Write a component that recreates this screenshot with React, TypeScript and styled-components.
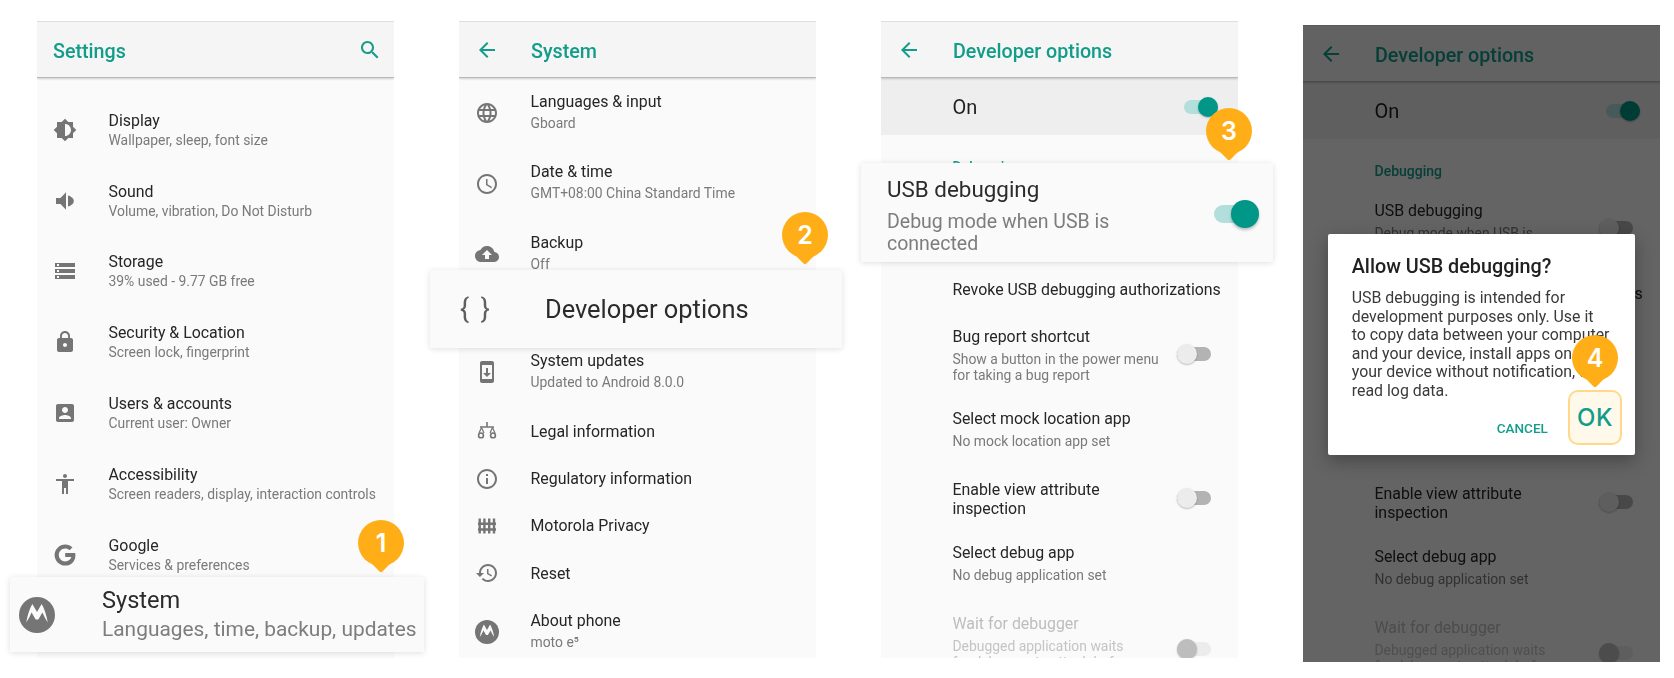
import { ReactNode } from 'react'
import styled, { createGlobalStyle } from 'styled-components'

const GlobalStyle = createGlobalStyle`
  html, body {
    margin: 0;
    padding: 0;
    background: #fff;
    font-family: Roboto, "Liberation Sans", sans-serif;
  }
`

const paths: Record<string, string> = {
  display:
    'M20 15.31L23.31 12 20 8.69V4h-4.69L12 .69 8.69 4H4v4.69L.69 12 4 15.31V20h4.69L12 23.31 15.31 20H20v-4.69zM12 18V6c3.31 0 6 2.69 6 6s-2.69 6-6 6z',
  sound: 'M3 9v6h4.5l5.5 5.8V3.2L7.5 9H3zM15 6.5v11c3-.8 5.8-2.8 5.8-5.5S18 7.3 15 6.5z',
  storage:
    'M2 20h20v-4H2v4zm2-3h2v2H4v-2zM2 4v4h20V4H2zm4 3H4V5h2v2zm-4 7h20v-4H2v4zm2-3h2v2H4v-2z',
  lock: 'M18 8h-1V6c0-2.76-2.24-5-5-5S7 3.24 7 6v2H6c-1.1 0-2 .9-2 2v10c0 1.1.9 2 2 2h12c1.1 0 2-.9 2-2V10c0-1.1-.9-2-2-2zm-6 9c-1.1 0-2-.9-2-2s.9-2 2-2 2 .9 2 2-.9 2-2 2zm3.1-9H8.9V6c0-1.71 1.39-3.1 3.1-3.1 1.71 0 3.1 1.39 3.1 3.1v2z',
  account:
    'M3 5v14c0 1.1.89 2 2 2h14c1.1 0 2-.9 2-2V5c0-1.1-.9-2-2-2H5c-1.11 0-2 .9-2 2zm12 4c0 1.66-1.34 3-3 3s-3-1.34-3-3 1.34-3 3-3 3 1.34 3 3zm-9 8c0-2 4-3.1 6-3.1s6 1.1 6 3.1v1H6v-1z',
  accessibility:
    'M12 2c1.1 0 2 .9 2 2s-.9 2-2 2-2-.9-2-2 .9-2 2-2zm9 7h-6v13h-2v-6h-2v6H9V9H3V7h18v2z',
  google:
    'M12.2 10v4.1h6.2c-.6 2.5-3 4.3-6.2 4.3-3.6 0-6.4-2.9-6.4-6.4s2.8-6.4 6.4-6.4c1.7 0 3.2.6 4.3 1.7l3-3C17.6 2.5 15.1 1.4 12.2 1.4 6.4 1.4 1.6 6.2 1.6 12s4.8 10.6 10.6 10.6c6.1 0 10.2-4.3 10.2-10.4 0-.7-.1-1.5-.2-2.2H12.2z',
  language:
    'M11.99 2C6.47 2 2 6.48 2 12s4.47 10 9.99 10C17.52 22 22 17.52 22 12S17.52 2 11.99 2zm6.93 6h-2.95c-.32-1.25-.78-2.45-1.38-3.56 1.84.63 3.37 1.91 4.33 3.56zM12 4.04c.83 1.2 1.48 2.53 1.91 3.96h-3.82c.43-1.43 1.08-2.76 1.91-3.96zM4.26 14C4.1 13.36 4 12.69 4 12s.1-1.36.26-2h3.38c-.08.66-.14 1.32-.14 2 0 .68.06 1.34.14 2H4.26zm.82 2h2.95c.32 1.25.78 2.45 1.38 3.56-1.84-.63-3.37-1.9-4.33-3.56zm2.95-8H5.08c.96-1.66 2.49-2.93 4.33-3.56C8.81 5.55 8.35 6.75 8.03 8zM12 19.96c-.83-1.2-1.48-2.53-1.91-3.96h3.82c-.43 1.43-1.08 2.76-1.91 3.96zM14.34 14H9.66c-.09-.66-.16-1.32-.16-2 0-.68.07-1.35.16-2h4.68c.09.65.16 1.32.16 2 0 .68-.07 1.34-.16 2zm.25 5.56c.6-1.11 1.06-2.31 1.38-3.56h2.95c-.96 1.65-2.49 2.93-4.33 3.56zM16.36 14c.08-.66.14-1.32.14-2 0-.68-.06-1.34-.14-2h3.38c.16.64.26 1.31.26 2s-.1 1.36-.26 2h-3.38z',
  clock:
    'M11.99 2C6.47 2 2 6.48 2 12s4.47 10 9.99 10C17.52 22 22 17.52 22 12S17.52 2 11.99 2zM12 20c-4.42 0-8-3.58-8-8s3.58-8 8-8 8 3.58 8 8-3.58 8-8 8zm.5-13H11v6l5.25 3.15.75-1.23-4.5-2.67z',
  backup:
    'M19.35 10.04C18.67 6.59 15.64 4 12 4 9.11 4 6.6 5.64 5.35 8.04 2.34 8.36 0 10.91 0 14c0 3.31 2.69 6 6 6h13c2.76 0 5-2.24 5-5 0-2.64-2.05-4.78-4.65-4.96zM14 13v4h-4v-4H7l5-5 5 5h-3z',
  update:
    'M17 1.01L7 1c-1.1 0-2 .9-2 2v18c0 1.1.9 2 2 2h10c1.1 0 2-.9 2-2V3c0-1.1-.9-1.99-2-1.99zM17 19H7V5h10v14zm-1-6h-3V8h-2v5H8l4 4 4-4z',
  info: 'M11 7h2v2h-2zm0 4h2v6h-2zm1-9C6.48 2 2 6.48 2 12s4.48 10 10 10 10-4.48 10-10S17.52 2 12 2zm0 18c-4.41 0-8-3.59-8-8s3.59-8 8-8 8 3.59 8 8-3.59 8-8 8z',
  history:
    'M13 3c-4.97 0-9 4.03-9 9H1l3.89 3.89.07.14L9 12H6c0-3.87 3.13-7 7-7s7 3.13 7 7-3.13 7-7 7c-1.93 0-3.68-.79-4.94-2.06l-1.42 1.42C8.27 19.99 10.51 21 13 21c4.97 0 9-4.03 9-9s-4.03-9-9-9zm-1 5v5l4.28 2.54.72-1.21-3.5-2.08V8H12z',
  back: 'M20 11H7.83l5.59-5.59L12 4l-8 8 8 8 1.41-1.41L7.83 13H20v-2z',
  search:
    'M15.5 14h-.79l-.28-.27C15.41 12.59 16 11.11 16 9.5 16 5.91 13.09 3 9.5 3S3 5.91 3 9.5 5.91 16 9.5 16c1.61 0 3.09-.59 4.23-1.57l.27.28v.79l5 4.99L20.49 19l-4.99-5zm-6 0C7.01 14 5 11.99 5 9.5S7.01 5 9.5 5 14 7.01 14 9.5 11.99 14 9.5 14z',
}

function Icon({ name, size = 24 }: { name: string; size?: number }) {
  return (
    <svg width={size} height={size} viewBox="0 0 24 24" fill="currentColor">
      <path fillRule="evenodd" d={paths[name]} />
    </svg>
  )
}

function MotoIcon({ size = 24 }: { size?: number }) {
  return (
    <svg width={size} height={size} viewBox="0 0 24 24">
      <circle cx="12" cy="12" r="12" fill="currentColor" />
      <path
        d="M4.8 17C5.8 11.5 7.2 7.5 8.9 4.6L12 10l3.1-5.4c1.7 2.9 3.1 6.9 4.1 12.4-1.4-2-2.6-4.2-3.6-6.6L12.9 15h-1.8L8.4 10.4C7.4 12.8 6.2 15 4.8 17z"
        fill="#fafafa"
      />
    </svg>
  )
}

function ScalesIcon() {
  return (
    <svg width={24} height={24} viewBox="0 0 24 24" fill="none" stroke="currentColor" strokeWidth="1.6">
      <path d="M12 3v5M5 8h14" />
      <path d="M6.5 8.5L4 14M6.5 8.5L9 14M17.5 8.5L15 14M17.5 8.5L20 14" strokeWidth="1.2" />
      <circle cx="6" cy="16.4" r="2.4" />
      <circle cx="18" cy="16.4" r="2.4" />
    </svg>
  )
}

function FenceIcon() {
  return (
    <svg width={24} height={24} viewBox="0 0 24 24" fill="currentColor">
      <path d="M3.5 4.5h2.4v15H3.5zM8.2 4.5h2.4v15H8.2zM13 4.5h2.4v15H13zM17.8 4.5h2.4v15h-2.4z" />
      <path d="M3 8.5h18v2.6H3zM3 14.2h18v2.6H3z" />
    </svg>
  )
}

const Page = styled.div`
  display: flex;
  gap: 65.5px;
  width: 1674px;
  height: 678px;
  padding-left: 37px;
  box-sizing: border-box;
  overflow: hidden;
  background: #fff;
`

const Column = styled.div<{ $top?: number }>`
  position: relative;
  flex: 0 0 356.5px;
  min-width: 0;
  height: 637px;
  margin-top: ${({ $top }) => $top ?? 21}px;
`

const Screen = styled.div`
  position: relative;
  display: flex;
  flex-direction: column;
  height: 100%;
  overflow: hidden;
  background: #fafafa;
  filter: blur(0.35px);
`

const Header = styled.div`
  position: relative;
  z-index: 1;
  flex: 0 0 57px;
  box-sizing: border-box;
  display: flex;
  align-items: center;
  padding: 0 12px 0 16px;
  background: #f5f5f5;
  border-top: 1px solid #dedede;
  border-bottom: 1px solid #b9b9b9;
  box-shadow: 0 1px 2px rgba(0, 0, 0, 0.18);
  color: #129c8a;
`

const HeaderTitle = styled.div<{ $indent?: boolean }>`
  flex: 1;
  padding-left: ${({ $indent }) => ($indent ? '32px' : '0')};
  font-size: 19.7px;
  font-weight: 500;
  margin-top: 3px;
`

const List = styled.div<{ $top?: number }>`
  padding-top: ${({ $top }) => $top ?? 0}px;
`

const Row = styled.div<{ $h: number }>`
  display: flex;
  align-items: center;
  height: ${({ $h }) => $h}px;
`

const IconSlot = styled.div`
  flex: 0 0 71.5px;
  box-sizing: border-box;
  padding-left: 16px;
  display: flex;
  color: #757575;
`

const Texts = styled.div<{ $gap: number; $lift?: number }>`
  display: flex;
  flex-direction: column;
  gap: ${({ $gap }) => $gap}px;
  padding-bottom: ${({ $lift }) => $lift ?? 0}px;
`

const Title = styled.div<{ $off?: boolean }>`
  font-size: 15.9px;
  line-height: 20px;
  white-space: nowrap;
  color: ${({ $off }) => ($off ? '#bdbdbd' : '#262626')};
`

const Sub = styled.div<{ $off?: boolean }>`
  font-size: 13.9px;
  line-height: 17px;
  white-space: nowrap;
  color: ${({ $off }) => ($off ? '#c4c4c4' : '#7a7a7a')};
`

const SingleTitle = styled(Title)`
  margin-top: 1px;
`

const OnBand = styled.div`
  flex: 0 0 57px;
  display: flex;
  align-items: center;
  justify-content: space-between;
  padding: 0 20px 0 71.5px;
  background: #eeeeee;
  font-size: 20px;
  color: #1f1f1f;
`

const SectionLabel = styled.div`
  flex: 0 0 47.5px;
  box-sizing: border-box;
  padding: 23px 0 0 71.5px;
  font-size: 14px;
  line-height: 18px;
  font-weight: 500;
  color: #129c8a;
`

const OptionRow = styled.div<{ $h: number }>`
  flex: 0 0 ${({ $h }) => $h}px;
  display: flex;
  justify-content: space-between;
  box-sizing: border-box;
  padding: 14.5px 27px 0 71.5px;
`

const OptionTitle = styled(Title)`
  line-height: 19px;
`

const OptionSub = styled(Sub)`
  margin-top: 5px;
  line-height: 16.3px;
`

const Track = styled.div<{ $on?: boolean; $off?: boolean }>`
  position: relative;
  flex: 0 0 34px;
  width: 34px;
  height: 14px;
  border-radius: 7px;
  background: ${({ $on, $off }) => ($on ? '#b2dfdb' : $off ? '#ececec' : '#b3b3b3')};
`

const Thumb = styled.div<{ $on?: boolean; $off?: boolean }>`
  position: absolute;
  top: -3px;
  left: ${({ $on }) => ($on ? '14px' : '0')};
  width: 20px;
  height: 20px;
  border-radius: 50%;
  background: ${({ $on, $off }) => ($on ? '#009688' : $off ? '#bdbdbd' : '#ececec')};
  box-shadow: 0 1px 2px rgba(0, 0, 0, 0.25);
`

const SwitchSlot = styled.div<{ $offset: number }>`
  margin-top: ${({ $offset }) => $offset}px;
`

const BigTrack = styled.div`
  position: relative;
  flex: 0 0 45px;
  height: 18px;
  margin: 3px 14px 0 0;
  border-radius: 9px;
  background: #b2dfdb;
`

const BigThumb = styled.div`
  position: absolute;
  top: -5px;
  right: 0;
  width: 28px;
  height: 28px;
  border-radius: 50%;
  background: #009688;
  box-shadow: 0 2px 3px rgba(0, 0, 0, 0.25);
`

function Switch({ on, off }: { on?: boolean; off?: boolean }) {
  return (
    <Track $on={on} $off={off}>
      <Thumb $on={on} $off={off} />
    </Track>
  )
}

function Option({
  h,
  title,
  sub,
  off,
  switchAt,
  disabled,
}: {
  h: number
  title: ReactNode
  sub?: ReactNode
  off?: boolean
  switchAt?: number
  disabled?: boolean
}) {
  return (
    <OptionRow $h={h}>
      <div>
        <OptionTitle $off={off}>{title}</OptionTitle>
        {sub && <OptionSub $off={off}>{sub}</OptionSub>}
      </div>
      {switchAt !== undefined && (
        <SwitchSlot $offset={switchAt}>
          <Switch off={disabled} />
        </SwitchSlot>
      )}
    </OptionRow>
  )
}

function DeveloperOptions() {
  return (
    <>
      <Header>
        <Icon name="back" />
        <HeaderTitle $indent>Developer options</HeaderTitle>
      </Header>
      <OnBand>
        On
        <Switch on />
      </OnBand>
      <SectionLabel>Debugging</SectionLabel>
      <Option
        h={83}
        title="USB debugging"
        sub={
          <>
            Debug mode when USB is
            <br />
            connected
          </>
        }
        switchAt={20}
      />
      <Option h={46.5} title="Revoke USB debugging authorizations" />
      <Option
        h={82.5}
        title="Bug report shortcut"
        sub={
          <>
            Show a button in the power menu
            <br />
            for taking a bug report
          </>
        }
        switchAt={20.5}
      />
      <Option h={71} title="Select mock location app" sub="No mock location app set" />
      <Option
        h={63}
        title={
          <>
            Enable view attribute
            <br />
            inspection
          </>
        }
        switchAt={11}
      />
      <Option h={71} title="Select debug app" sub="No debug application set" />
      <Option
        h={100}
        off
        disabled
        title="Wait for debugger"
        sub={
          <>
            Debugged application waits
            <br />
            for debugger to attach before
          </>
        }
        switchAt={28}
      />
    </>
  )
}

const Callout = styled.div<{ $left: number; $top: number; $w: number; $h: number }>`
  position: absolute;
  z-index: 2;
  left: ${({ $left }) => $left}px;
  top: ${({ $top }) => $top}px;
  width: ${({ $w }) => $w}px;
  height: ${({ $h }) => $h}px;
  box-sizing: border-box;
  display: flex;
  align-items: center;
  background: #fafafa;
  box-shadow: 0 1px 6px rgba(0, 0, 0, 0.13);
  filter: blur(0.3px);
`

const CalloutIcon = styled.div<{ $w: number; $pad: number }>`
  flex: 0 0 ${({ $w }) => $w}px;
  box-sizing: border-box;
  padding-left: ${({ $pad }) => $pad}px;
  display: flex;
  color: #757575;
`

const CalloutTitle = styled.div<{ $size: number }>`
  font-size: ${({ $size }) => $size}px;
  line-height: 30px;
  white-space: nowrap;
  color: #2b2b2b;
`

const CalloutSub = styled.div<{ $size: number; $gap: number }>`
  margin-top: ${({ $gap }) => $gap}px;
  font-size: ${({ $size }) => $size}px;
  line-height: 22.5px;
  white-space: nowrap;
  color: #7d7d7d;
`

const Braces = styled.div`
  font-size: 27px;
  line-height: 30px;
  color: #5f5f5f;
  word-spacing: 5px;
`

const CalloutText = styled.div<{ $pad: string }>`
  flex: 1;
  padding: ${({ $pad }) => $pad};
`

const Badge = styled.div<{ $left: number; $top: number }>`
  position: absolute;
  z-index: 3;
  left: ${({ $left }) => $left}px;
  top: ${({ $top }) => $top}px;
  width: 46px;
  height: 46px;
  border-radius: 50%;
  background: #ffae17;
  color: #fff;
  font-family: Inter, Roboto, sans-serif;
  font-size: 25px;
  font-weight: 600;
  line-height: 46px;
  text-align: center;

  &::after {
    content: '';
    position: absolute;
    left: 16px;
    top: 36px;
    width: 14px;
    height: 14px;
    background: #ffae17;
    border-radius: 0 0 2px 0;
    transform: rotate(45deg);
  }
`

const BadgeDigit = styled.span`
  position: relative;
  z-index: 1;
`

const Scrim = styled.div`
  position: absolute;
  inset: 0;
  z-index: 1;
  box-sizing: border-box;
  padding-top: 2px;
  display: flex;
  align-items: center;
  justify-content: center;
  background: rgba(0, 0, 0, 0.6);
`

const Dialog = styled.div`
  width: 307px;
  height: 221px;
  box-sizing: border-box;
  padding: 21px 0 0 24px;
  background: #fff;
  border-radius: 2px;
  box-shadow: 0 6px 18px rgba(0, 0, 0, 0.3);
`

const DialogTitle = styled.div`
  font-size: 19.8px;
  font-weight: 500;
  line-height: 24px;
  color: #212121;
`

const DialogBody = styled.div`
  margin-top: 10px;
  font-size: 15.9px;
  line-height: 18.6px;
  color: #3a3a3a;
  white-space: nowrap;
`

const DialogActions = styled.div`
  margin-top: 19px;
  padding-left: 145px;
  font-size: 13.5px;
  font-weight: 500;
  color: #129c8a;
`

const OkBox = styled.div`
  position: absolute;
  z-index: 2;
  left: 265px;
  top: 365px;
  width: 54px;
  height: 55px;
  box-sizing: border-box;
  display: flex;
  align-items: center;
  justify-content: center;
  border: 2px solid #ffd98a;
  border-radius: 10px;
  background: #fff9ec;
  color: #129c8a;
  font-family: Inter, Roboto, sans-serif;
  font-size: 24px;
  font-weight: 500;
  letter-spacing: 0.5px;
`

export default function App() {
  return (
    <>
      <GlobalStyle />
      <Page>
        <Column>
          <Screen>
            <Header>
              <HeaderTitle>Settings</HeaderTitle>
              <Icon name="search" />
            </Header>
            <List $top={16.5}>
              <Row $h={70.8}>
                <IconSlot><Icon name="display" /></IconSlot>
                <Texts $gap={1}><Title>Display</Title><Sub>Wallpaper, sleep, font size</Sub></Texts>
              </Row>
              <Row $h={70.8}>
                <IconSlot><Icon name="sound" /></IconSlot>
                <Texts $gap={1}><Title>Sound</Title><Sub>Volume, vibration, Do Not Disturb</Sub></Texts>
              </Row>
              <Row $h={70.8}>
                <IconSlot><Icon name="storage" /></IconSlot>
                <Texts $gap={1}><Title>Storage</Title><Sub>39% used - 9.77 GB free</Sub></Texts>
              </Row>
              <Row $h={70.8}>
                <IconSlot><Icon name="lock" /></IconSlot>
                <Texts $gap={1}><Title>Security &amp; Location</Title><Sub>Screen lock, fingerprint</Sub></Texts>
              </Row>
              <Row $h={70.8}>
                <IconSlot><Icon name="account" /></IconSlot>
                <Texts $gap={1}><Title>Users &amp; accounts</Title><Sub>Current user: Owner</Sub></Texts>
              </Row>
              <Row $h={70.8}>
                <IconSlot><Icon name="accessibility" /></IconSlot>
                <Texts $gap={1}><Title>Accessibility</Title><Sub>Screen readers, display, interaction controls</Sub></Texts>
              </Row>
              <Row $h={70.8}>
                <IconSlot><Icon name="google" /></IconSlot>
                <Texts $gap={1}><Title>Google</Title><Sub>Services &amp; preferences</Sub></Texts>
              </Row>
            </List>
          </Screen>
          <Callout $left={-27} $top={556} $w={414} $h={75}>
            <CalloutIcon $w={92} $pad={9}><MotoIcon size={36} /></CalloutIcon>
            <CalloutText $pad="0 0 3px 0">
              <CalloutTitle $size={23.6}>System</CalloutTitle>
              <CalloutSub $size={20.9} $gap={3}>Languages, time, backup, updates</CalloutSub>
            </CalloutText>
          </Callout>
          <Badge $left={321} $top={499}><BadgeDigit>1</BadgeDigit></Badge>
        </Column>

        <Column>
          <Screen>
            <Header>
              <Icon name="back" />
              <HeaderTitle $indent>System</HeaderTitle>
            </Header>
            <List>
              <Row $h={70.6}>
                <IconSlot><Icon name="language" /></IconSlot>
                <Texts $gap={3} $lift={3}><Title>Languages &amp; input</Title><Sub>Gboard</Sub></Texts>
              </Row>
              <Row $h={70.6}>
                <IconSlot><Icon name="clock" /></IconSlot>
                <Texts $gap={3} $lift={3}><Title>Date &amp; time</Title><Sub>GMT+08:00 China Standard Time</Sub></Texts>
              </Row>
              <Row $h={70.6}>
                <IconSlot><Icon name="backup" /></IconSlot>
                <Texts $gap={3} $lift={3}><Title>Backup</Title><Sub>Off</Sub></Texts>
              </Row>
              <Row $h={47.3}>
                <IconSlot />
                <SingleTitle>Developer options</SingleTitle>
              </Row>
              <Row $h={70.6}>
                <IconSlot><Icon name="update" /></IconSlot>
                <Texts $gap={3} $lift={3}><Title>System updates</Title><Sub>Updated to Android 8.0.0</Sub></Texts>
              </Row>
              <Row $h={47.3}>
                <IconSlot><ScalesIcon /></IconSlot>
                <SingleTitle>Legal information</SingleTitle>
              </Row>
              <Row $h={47.3}>
                <IconSlot><Icon name="info" /></IconSlot>
                <SingleTitle>Regulatory information</SingleTitle>
              </Row>
              <Row $h={47.3}>
                <IconSlot><FenceIcon /></IconSlot>
                <SingleTitle>Motorola Privacy</SingleTitle>
              </Row>
              <Row $h={47.3}>
                <IconSlot><Icon name="history" /></IconSlot>
                <SingleTitle>Reset</SingleTitle>
              </Row>
              <Row $h={70.6}>
                <IconSlot><MotoIcon /></IconSlot>
                <Texts $gap={3} $lift={3}><Title>About phone</Title><Sub>moto e⁵</Sub></Texts>
              </Row>
            </List>
          </Screen>
          <Callout $left={-29} $top={249} $w={412} $h={78}>
            <CalloutIcon $w={115} $pad={30}>
              <Braces>{'{ }'}</Braces>
            </CalloutIcon>
            <CalloutText $pad="0">
              <CalloutTitle $size={25.4}>Developer options</CalloutTitle>
            </CalloutText>
          </Callout>
          <Badge $left={323} $top={191}><BadgeDigit>2</BadgeDigit></Badge>
        </Column>

        <Column>
          <Screen>
            <DeveloperOptions />
          </Screen>
          <Callout $left={-20} $top={142} $w={412} $h={99}>
            <CalloutText $pad="4px 0 0 26px">
              <CalloutTitle $size={22.4}>USB debugging</CalloutTitle>
              <CalloutSub $size={19.5} $gap={7}>
                Debug mode when USB is
                <br />
                connected
              </CalloutSub>
            </CalloutText>
            <BigTrack>
              <BigThumb />
            </BigTrack>
          </Callout>
          <Badge $left={325} $top={87}><BadgeDigit>3</BadgeDigit></Badge>
        </Column>

        <Column $top={25}>
          <Screen>
            <DeveloperOptions />
            <Scrim>
              <Dialog>
                <DialogTitle>Allow USB debugging?</DialogTitle>
                <DialogBody>
                  USB debugging is intended for
                  <br />
                  development purposes only. Use it
                  <br />
                  to copy data between your computer
                  <br />
                  and your device, install apps on
                  <br />
                  your device without notification, and
                  <br />
                  read log data.
                </DialogBody>
                <DialogActions>CANCEL</DialogActions>
              </Dialog>
            </Scrim>
          </Screen>
          <OkBox>OK</OkBox>
          <Badge $left={269} $top={310}><BadgeDigit>4</BadgeDigit></Badge>
        </Column>
      </Page>
    </>
  )
}
